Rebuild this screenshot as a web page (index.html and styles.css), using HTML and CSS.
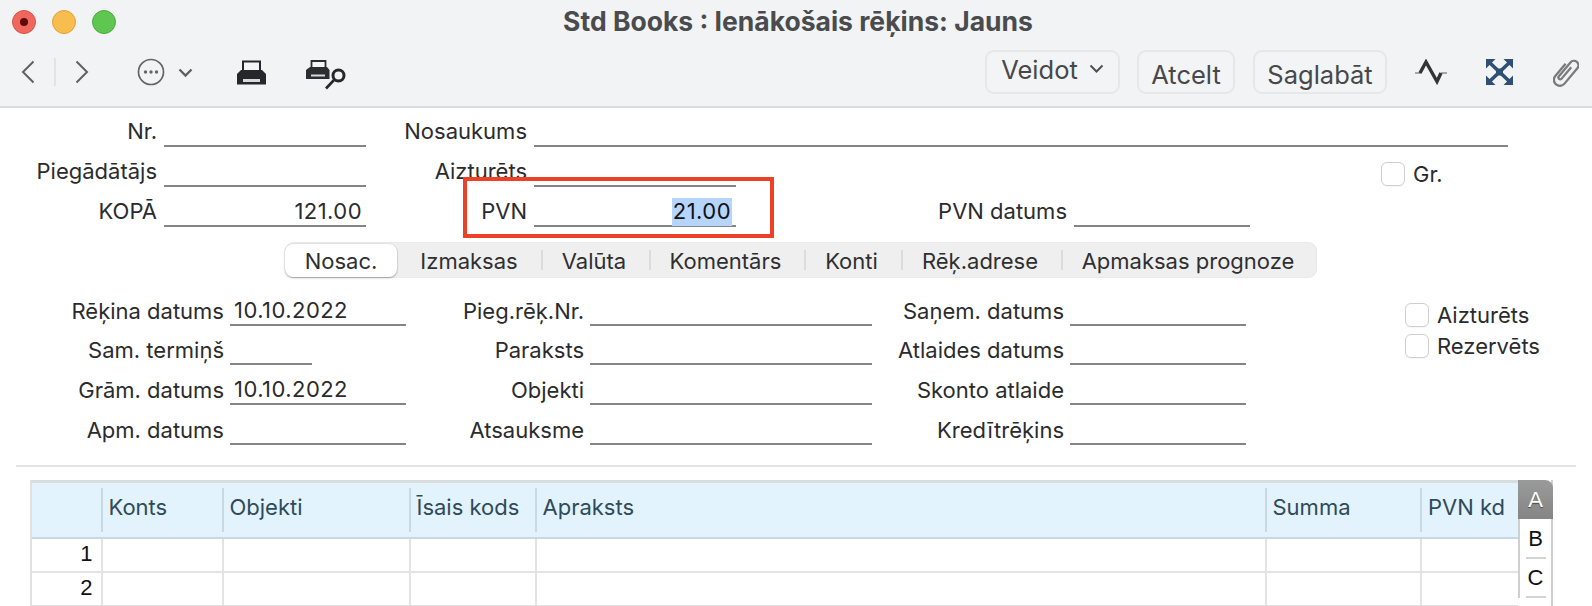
FILE: index.html
```html
<!DOCTYPE html>
<html lang="lv">
<head>
<meta charset="utf-8">
<title>Std Books</title>
<link rel="stylesheet" href="styles.css">
</head>
<body>
<div class="window">
  <header class="chrome">
    <div class="titlebar">
      <div class="lights">
        <span class="light red"><i></i></span>
        <span class="light yellow"></span>
        <span class="light green"></span>
      </div>
      <h1 class="title">Std Books : Ienākošais rēķins: Jauns</h1>
    </div>
    <div class="toolbar">
      <svg class="ic nav-back" width="14" height="24" viewBox="0 0 14 24"><path d="M12.5 1.5 2 12l10.5 10.5" fill="none" stroke="#5f6063" stroke-width="2"/></svg>
      <span class="nav-sep"></span>
      <svg class="ic nav-fwd" width="14" height="24" viewBox="0 0 14 24"><path d="M1.5 1.5 12 12 1.5 22.5" fill="none" stroke="#5f6063" stroke-width="2"/></svg>
      <svg class="ic more" width="28" height="28" viewBox="0 0 28 28"><circle cx="14" cy="14" r="12.5" fill="none" stroke="#646568" stroke-width="1.7"/><circle cx="8.5" cy="14" r="1.7" fill="#646568"/><circle cx="14" cy="14" r="1.7" fill="#646568"/><circle cx="19.5" cy="14" r="1.7" fill="#646568"/></svg>
      <svg class="ic more-chev" width="15" height="10" viewBox="0 0 15 10"><path d="M1.5 1.5 7.5 7.5 13.5 1.5" fill="none" stroke="#5f6063" stroke-width="2.4"/></svg>
      <svg class="ic printer" width="31" height="25" viewBox="0 0 31 25"><path d="M7 11V1.5h17V11" fill="#f4f5f6" stroke="#26272a" stroke-width="2"/><path d="M5 10h21l4 4v10.500H1V14z" fill="#26272a"/><rect x="7" y="19" width="17" height="3" fill="#d8d9db"/></svg>
      <svg class="ic preview" width="41" height="30" viewBox="0 0 41 30"><path d="M5.500 8V1h14v7" fill="#f4f5f6" stroke="#2c2d30" stroke-width="1.800"/><path d="M4 7h17l2.500 3v9H0v-9z" fill="#2c2d30"/><rect x="5" y="14.500" width="14" height="2" fill="#d8d9db"/><circle cx="32.500" cy="15.500" r="5.500" fill="none" stroke="#26272a" stroke-width="3"/><path d="M28 20l-8 8.500" stroke="#26272a" stroke-width="2.600"/></svg>
      <span class="spacer"></span>
      <button class="btn btn-menu" type="button">Veidot <svg width="15" height="10" viewBox="0 0 15 10"><path d="M1.500 1.500 7.500 7.500 13.500 1.500" fill="none" stroke="#4f5053" stroke-width="2"/></svg></button>
      <button class="btn btn-atcelt" type="button"><span>Atcelt</span></button>
      <button class="btn btn-save" type="button"><span>Saglabāt</span></button>
      <svg class="ic wave" width="32" height="26" viewBox="0 0 32 26"><path d="M0 14H6M26 14H32" fill="none" stroke="#8e8f91" stroke-width="1.500"/><path d="M5 14 11 3 22 22.500 26 14" fill="none" stroke="#333437" stroke-width="3.400"/></svg>
      <svg class="ic expand" width="27" height="26" viewBox="0 0 27 26"><path d="M4 4l19 18M23 4 4 22" stroke="#2f4f73" stroke-width="3.600"/><path d="M0 0h9.500L0 9.500zM27 0H17.500L27 9.500zM0 26h9.500L0 16.500zM27 26H17.500L27 16.500z" fill="#2f4f73"/><rect x="10" y="9.500" width="7" height="7" fill="#2f4f73"/></svg>
      <svg class="ic clip" width="26" height="31" viewBox="0 0 26 31"><g transform="rotate(40 13 15.500)"><path d="M7 9V25a6 6 0 0 0 12 0V5a4.500 4.500 0 0 0-9 0V23a1.800 1.800 0 0 0 3.600 0V8" fill="none" stroke="#797b7e" stroke-width="2.300"/></g></svg>
    </div>
  </header>

  <main class="content">
    <section class="top-form">
      <label class="lab">Nr.</label>
      <span class="field"></span>
      <label class="lab">Nosaukums</label>
      <span class="field wide"></span>

      <label class="lab">Piegādātājs</label>
      <span class="field"></span>
      <label class="lab">Aizturēts</label>
      <span class="field"></span>
      <label class="check gr"><span class="box"></span>Gr.</label>

      <label class="lab">KOPĀ</label>
      <span class="field num">121.00</span>
      <label class="lab">PVN</label>
      <span class="field num"><mark class="sel">21.00</mark></span>
      <label class="lab">PVN datums</label>
      <span class="field"></span>
      <span class="callout"></span>
    </section>

    <nav class="tabs">
      <span class="tab active">Nosac.</span>
      <span class="tab t2">Izmaksas</span>
      <span class="tab t3 sep">Valūta</span>
      <span class="tab t4 sep">Komentārs</span>
      <span class="tab t5 sep">Konti</span>
      <span class="tab t6 sep">Rēķ.adrese</span>
      <span class="tab t7 sep">Apmaksas prognoze</span>
    </nav>

    <section class="sub-form">
      <label class="lab">Rēķina datums</label>
      <span class="field val">10.10.2022</span>
      <label class="lab">Pieg.rēķ.Nr.</label>
      <span class="field"></span>
      <label class="lab">Saņem. datums</label>
      <span class="field"></span>
      <label class="check side"><span class="box"></span>Aizturēts</label>

      <label class="lab">Sam. termiņš</label>
      <span class="field short"></span>
      <label class="lab">Paraksts</label>
      <span class="field"></span>
      <label class="lab">Atlaides datums</label>
      <span class="field"></span>
      <label class="check side up"><span class="box"></span>Rezervēts</label>

      <label class="lab">Grām. datums</label>
      <span class="field val">10.10.2022</span>
      <label class="lab">Objekti</label>
      <span class="field"></span>
      <label class="lab">Skonto atlaide</label>
      <span class="field"></span>
      <span></span>

      <label class="lab">Apm. datums</label>
      <span class="field"></span>
      <label class="lab">Atsauksme</label>
      <span class="field"></span>
      <label class="lab">Kredītrēķins</label>
      <span class="field"></span>
      <span></span>
    </section>

    <hr class="divider">

    <section class="matrix-wrap">
      <div class="matrix">
        <div class="head"></div>
        <div class="head">Konts</div>
        <div class="head">Objekti</div>
        <div class="head">Īsais kods</div>
        <div class="head">Apraksts</div>
        <div class="head">Summa</div>
        <div class="head">PVN kd</div>

        <div class="cell no">1</div><div class="cell"></div><div class="cell"></div><div class="cell"></div><div class="cell"></div><div class="cell"></div><div class="cell"></div>
        <div class="cell no">2</div><div class="cell"></div><div class="cell"></div><div class="cell"></div><div class="cell"></div><div class="cell"></div><div class="cell"></div>
      </div>
      <div class="pages">
        <span class="page on">A</span>
        <span class="page">B</span>
        <span class="page">C</span>
      </div>
    </section>
  </main>
</div>
</body>
</html>
```
FILE: styles.css
```css
* { box-sizing: border-box; }
html, body { margin: 0; padding: 0; background: #fff; }
body { width: 1592px; height: 606px; overflow: hidden; font-family: Inter, "Liberation Sans", sans-serif; color: #2b2b2d; }
.window { width: 1592px; height: 606px; overflow: hidden; }

/* window chrome */
.chrome { height: 108px; background: #f2f3f5; border-bottom: 2px solid #dadbdc; }
.titlebar { height: 44px; display: flex; align-items: center; justify-content: center; position: relative; }
.lights { position: absolute; left: 12px; top: 10px; display: flex; gap: 16px; }
.light { width: 24px; height: 24px; border-radius: 50%; display: flex; align-items: center; justify-content: center; border: 1px solid transparent; }
.red { background: #f1675d; border-color: #dd5349; }
.red i { width: 8px; height: 8px; border-radius: 50%; background: #5e0c08; }
.yellow { background: #f7be4f; border-color: #e0a334; }
.green { background: #5fc651; border-color: #4aae3d; }
.title { margin: 0 0 3px 4px; font-size: 26.500px; font-weight: 700; color: #4a4b4d; line-height: 30px; }

.toolbar { height: 62px; display: flex; align-items: center; padding: 0 13px 6px 21px; }
.ic { flex: none; display: block; }
.nav-sep { width: 2px; height: 28px; background: #e2e3e5; margin-left: 19px; }
.nav-fwd { margin-left: 19px; }
.more { margin-left: 48px; }
.more-chev { margin-left: 13px; margin-top: 2px; }
.printer { margin-left: 43px; }
.preview { margin-left: 39px; margin-top: 6px; }
.spacer { flex: 1; }
.btn { height: 44px; border: 2px solid #e6e7e9; border-radius: 9px; background: #f3f4f6; font: 400 25.500px Inter, "Liberation Sans", sans-serif; color: #47484a; padding: 0; display: flex; align-items: center; justify-content: center; }
.btn span { position: relative; top: 2px; }
.btn-menu { width: 135px; gap: 11px; padding-bottom: 6px; }
.btn-atcelt { width: 98px; margin-left: 17px; }
.btn-save { width: 134px; margin-left: 18px; }
.wave { margin-left: 28px; }
.expand { margin-left: 39px; }
.clip { margin-left: 40px; }

/* forms */
.content { display: block; font-size: 22px; }
.lab { text-align: right; align-self: end; line-height: 26px; padding-bottom: 2px; white-space: nowrap; }
.top-form .lab { padding-bottom: 3px; }
.field { display: block; height: 30px; border-bottom: 2px solid #858585; line-height: 29px; font-size: 22px; letter-spacing: .45px; align-self: end; position: relative; white-space: nowrap; }
.num { text-align: right; padding-right: 4px; }
.val { padding-left: 4px; }
.short { width: 82px; }
.sel { background: #b5d5fd; color: #111; display: inline-block; height: 28px; line-height: 27px; padding: 0 1px; }

.top-form { display: grid; grid-template-columns: 157px 202px 154px 202px 324px 176px 251px; grid-auto-rows: 40px; column-gap: 7px; height: 118px; position: relative; margin-top: -1px; }
.wide { grid-column: 4 / span 4; }
.gr { grid-column: 5 / span 3; }
.top-form > .check + .lab { grid-column: 1; }
.check { display: flex; align-items: center; gap: 8px; white-space: nowrap; }
.box { width: 24px; height: 24px; border: 1px solid #cfcfcf; border-radius: 6px; background: #fff; flex: none; box-shadow: 0 1px 1px rgba(0,0,0,.04); }
.gr { padding-left: 638px; padding-top: 14px; }
.callout { position: absolute; left: 463px; top: 70px; width: 311px; height: 61px; border: 4px solid #ec4126; pointer-events: none; }

.tabs { display: flex; align-items: center; height: 36px; width: 1032px; margin-left: 285px; margin-top: 17px; background: #efefef; border-radius: 9px; box-shadow: inset 0 0 0 1px #e9e9e9; font-size: 22px; color: #2f2f31; }
.tab { display: flex; align-items: center; justify-content: center; height: 32px; position: relative; padding-top: 2px; }
.tab.active { width: 112px; background: #fff; border-radius: 8px; box-shadow: 0 1px 2px rgba(0,0,0,.3), 0 0 0 1px rgba(0,0,0,.04); height: 33px; }
.sep { padding-right: 2px; }
.sep::before { content: ""; position: absolute; left: 0; top: 6px; height: 20px; width: 2px; background: #dcdcdc; }
.t2 { width: 144px; }
.t3 { width: 108px; }
.t4 { width: 155px; }
.t5 { width: 97px; }
.t6 { width: 160px; }
.t7 { width: 256px; }

.sub-form { display: grid; grid-template-columns: 224px 176px 172px 282px 186px 176px 1fr; column-gap: 6px; grid-auto-rows: 39.700px; margin-top: 8px; height: 159px; }
.side { padding-left: 153px; align-self: start; padding-top: 16px; }
.up { padding-top: 7px; }

.divider { margin: 20px 0 0 16px; width: 1560px; height: 2px; border: 0; background: #e3e3e3; }

/* matrix */
.matrix-wrap { display: flex; margin: 13px 0 0 30px; width: 1523px; }
.matrix { width: 1488px; display: grid; grid-template-columns: 68.500px 121px 187px 126px 730px 155.500px 98px; grid-template-rows: 56px 34px 34px; border-top: 3px solid #dadde0; border-left: 2px solid #e0e0e0; }
.head { background: #e2f3fd; border-bottom: 2px solid #c6d9e4; color: #2f4a58; font-size: 22px; line-height: 48px; padding-left: 8px; position: relative; white-space: nowrap; }
.head + .head::before { content: ""; position: absolute; left: 0; top: 5px; height: 44px; width: 2px; background: #c9d9e2; }
.cell { border-bottom: 2px solid #e3e3e3; border-left: 2px solid #e3e3e3; color: #111; }
.no { border-left: 0; text-align: right; padding-right: 8px; line-height: 30px; font-family: "Liberation Sans", sans-serif; font-size: 22px; }
.pages { width: 35px; display: flex; flex-direction: column; align-items: stretch; border-right: 2px solid #cfcfcf; }
.page { height: 39.500px; flex: none; display: flex; align-items: center; justify-content: center; font-family: "Liberation Sans", sans-serif; font-size: 22px; color: #111; position: relative; }
.page.on { height: 39px; background: linear-gradient(#9a9a9a, #858585); color: #fff; border-radius: 0 8px 0 0; text-shadow: 0 1px 1px #444; margin-right: -2px; }
.page:not(.on)::after { content: ""; position: absolute; left: 6px; right: 5px; bottom: 0; height: 2px; background: #d4d4d4; }
.page:not(.on) { border-left: 2px solid #cfcfcf; }
```
